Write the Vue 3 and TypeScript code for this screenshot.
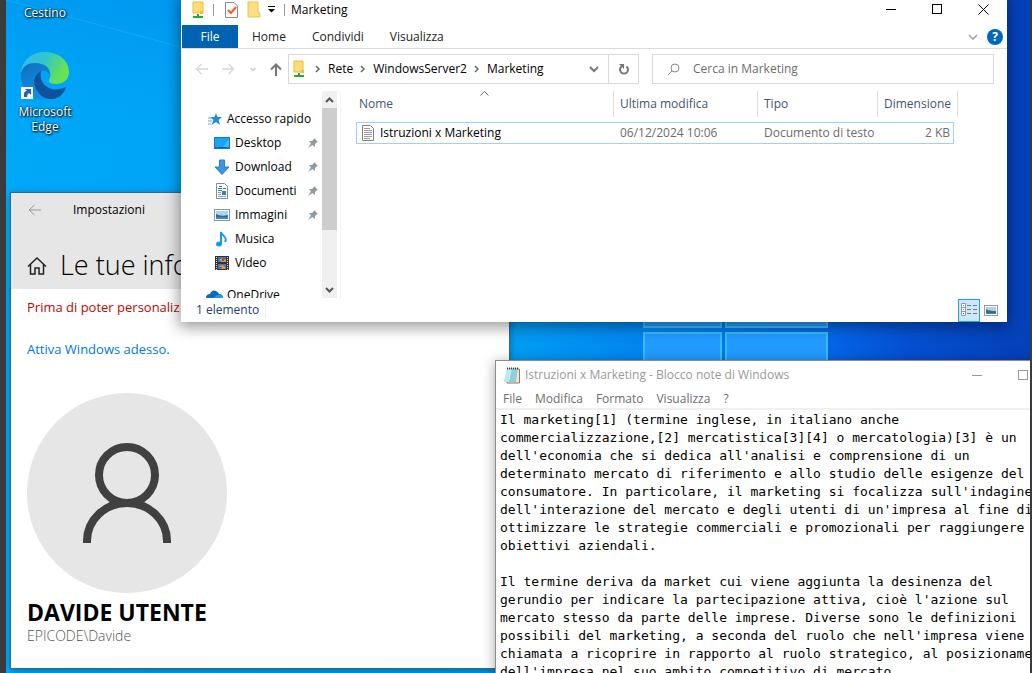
<script setup lang="ts">
import { ref } from 'vue'

interface NavItem {
  label: string
  icon: 'desktop' | 'download' | 'documents' | 'pictures' | 'music' | 'video'
  pinned: boolean
}

const navItems: NavItem[] = [
  { label: 'Desktop', icon: 'desktop', pinned: true },
  { label: 'Download', icon: 'download', pinned: true },
  { label: 'Documenti', icon: 'documents', pinned: true },
  { label: 'Immagini', icon: 'pictures', pinned: true },
  { label: 'Musica', icon: 'music', pinned: false },
  { label: 'Video', icon: 'video', pinned: false },
]

const crumbs: string[] = ['Rete', 'WindowsServer2', 'Marketing']
const ribbonTabs: string[] = ['Home', 'Condividi', 'Visualizza']
const notepadMenus: string[] = ['File', 'Modifica', 'Formato', 'Visualizza', '?']
const search = ref('')

const note = ref(
  [
    'Il marketing[1] (termine inglese, in italiano anche',
    'commercializzazione,[2] mercatistica[3][4] o mercatologia)[3] è un',
    "dell'economia che si dedica all'analisi e comprensione di un",
    'determinato mercato di riferimento e allo studio delle esigenze del',
    "consumatore. In particolare, il marketing si focalizza sull'indagine",
    "dell'interazione del mercato e degli utenti di un'impresa al fine di",
    'ottimizzare le strategie commerciali e promozionali per raggiungere',
    'obiettivi aziendali.',
    '',
    'Il termine deriva da market cui viene aggiunta la desinenza del',
    "gerundio per indicare la partecipazione attiva, cioè l'azione sul",
    'mercato stesso da parte delle imprese. Diverse sono le definizioni',
    "possibili del marketing, a seconda del ruolo che nell'impresa viene",
    'chiamata a ricoprire in rapporto al ruolo strategico, al posizionamento',
    "dell'impresa nel suo ambito competitivo di mercato.",
  ].join('\n'),
)
</script>

<template>
  <div class="screen">
    <main class="desktop">
      <svg class="wallpaper" viewBox="0 0 1024 673" preserveAspectRatio="none" aria-hidden="true">
        <defs>
          <linearGradient id="sky" x1="0" y1="0" x2="1" y2="0">
            <stop offset="0" stop-color="#00a8f8" />
            <stop offset="0.5" stop-color="#009cf2" />
            <stop offset="0.63" stop-color="#0084f2" />
            <stop offset="0.8" stop-color="#0467e8" />
            <stop offset="0.88" stop-color="#0450d2" />
            <stop offset="1" stop-color="#0540b8" />
          </linearGradient>
          <linearGradient id="shade" x1="0" y1="0" x2="0" y2="1">
            <stop offset="0" stop-color="#0087e8" stop-opacity="0.4" />
            <stop offset="0.25" stop-color="#00a4fb" stop-opacity="0" />
          </linearGradient>
        </defs>
        <rect width="1024" height="673" fill="url(#sky)" />
        <rect width="1000" height="673" fill="url(#shade)" />
        <path d="M0 0L182 49" stroke="#3bb8fb" stroke-width="1" opacity="0.4" />
        <g fill="#229bff" stroke="#35bff5" stroke-width="2">
          <rect x="638" y="200" width="77" height="127" />
          <rect x="720" y="200" width="101" height="127" />
          <rect x="638" y="333" width="77" height="120" />
          <rect x="720" y="333" width="101" height="120" />
        </g>
      </svg>

      <div class="shortcuts">
        <a class="shortcut" href="#cestino">Cestino</a>
        <a class="shortcut" href="#edge">
          <svg class="edge" width="50" height="50" viewBox="0 0 50 50" aria-hidden="true">
            <defs>
              <linearGradient id="edgeTop" x1="0" y1="0" x2="1" y2="0.4">
                <stop offset="0" stop-color="#35b8f0" />
                <stop offset="0.5" stop-color="#2fc6cd" />
                <stop offset="1" stop-color="#6be34b" />
              </linearGradient>
              <linearGradient id="edgeLeft" x1="0" y1="0" x2="0.5" y2="1">
                <stop offset="0" stop-color="#0f6fc0" />
                <stop offset="1" stop-color="#138fe4" />
              </linearGradient>
            </defs>
            <path d="M1 22C2 9 12 1 25 1C39 1 49 10 49 21C49 29 43 33 36 33C31 33 28 31 29 29C31 26 31 21 28 17C22 10 7 12 1 22Z" fill="url(#edgeTop)" />
            <path d="M1 22C3 15 8 12 15 12C25 12 31 18 30 25C29 21 25 19 22 20C14 22 12 31 16 38C19 44 24 48 30 48C14 52 0 41 1 22Z" fill="url(#edgeLeft)" />
            <path d="M21 20C13 24 12 33 18 41C25 51 40 51 46 37C46 36 45 36 44 37C30 42 18 33 21 20Z" fill="#10519b" />
            <rect x="1" y="36" width="12" height="12" fill="#f4f4f4" />
            <path d="M4 46V43Q4 40 7 40L5 38H11V44L9 42Q7 43 7 46Z" fill="#2860a8" />
          </svg>
          <span>Microsoft<br />Edge</span>
        </a>
      </div>

      <section class="window settings" aria-label="Impostazioni">
        <header class="settings-head">
          <div class="settings-bar">
            <button class="plain" aria-label="Indietro">
              <svg width="14" height="12" viewBox="0 0 14 12"><path d="M13 6H1M6.500 1L1 6L6.500 11" fill="none" stroke="#999" /></svg>
            </button>
            <span>Impostazioni</span>
          </div>
          <div class="settings-title">
            <svg width="20" height="20" viewBox="0 0 20 20" aria-hidden="true">
              <path d="M1 10.500L10 2L19 10.500M3.500 8.500V18H8V12H12V18H16.500V8.500" fill="none" stroke="#222" stroke-width="1.500" />
            </svg>
            <h1>Le tue info</h1>
          </div>
        </header>
        <div class="settings-body">
          <p class="warning">Prima di poter personaliz</p>
          <a class="activate" href="#attiva">Attiva Windows adesso.</a>
          <svg class="avatar" width="200" height="200" viewBox="0 0 200 200" role="img" aria-label="Avatar">
            <circle cx="100" cy="100" r="100" fill="#e6e6e6" />
            <g fill="none" stroke="#404040" stroke-width="8">
              <circle cx="100" cy="82" r="28" />
              <path d="M60 150V148A40 38 0 0 1 140 148V150" />
            </g>
          </svg>
          <h2>DAVIDE UTENTE</h2>
          <p class="account">EPICODE\Davide</p>
        </div>
      </section>

      <section class="window explorer" aria-label="Marketing">
        <header class="titlebar">
          <svg width="14" height="18" viewBox="0 0 14 18" aria-hidden="true">
            <path d="M2 1H12V12H2Z" fill="#fbdc76" stroke="#e7bd42" /><path d="M9 10H12V13H9Z" fill="#e7bd42" />
            <path d="M6 13H8V15H12V17H2V15H6Z" fill="#27a83a" />
          </svg>
          <i class="tick"></i>
          <svg class="check-icon" width="13" height="16" viewBox="0 0 13 16" aria-hidden="true">
            <path d="M.5 .5H9L12.500 4V15.500H.5Z" fill="#f7f9fb" stroke="#8b8b8b" /><path d="M3 8L6 11L11 5" fill="none" stroke="#f0601c" stroke-width="2" />
          </svg>
          <svg class="folder-icon" width="14" height="17" viewBox="0 0 14 17" aria-hidden="true">
            <path d="M1 1H11V11L13 12V16H1Z" fill="#fddf80" stroke="#eac254" />
          </svg>
          <svg class="menu-icon" width="8" height="7" viewBox="0 0 8 7" aria-hidden="true"><path d="M0 .5H7" stroke="#000" /><path d="M0 3H7L3.500 6.500Z" fill="#000" /></svg>
          <i class="tick second"></i>
          <span class="caption">Marketing</span>
          <div class="controls">
            <button aria-label="Riduci a icona"><svg width="11" height="11" viewBox="0 0 11 11"><path d="M0 5.500H10" stroke="#000" /></svg></button>
            <button aria-label="Ingrandisci"><svg width="11" height="11" viewBox="0 0 11 11"><rect x=".5" y=".5" width="9" height="9" fill="none" stroke="#000" /></svg></button>
            <button aria-label="Chiudi"><svg width="11" height="11" viewBox="0 0 11 11"><path d="M.5 .5L10.500 10.500M10.500 .5L.5 10.500" stroke="#000" /></svg></button>
          </div>
        </header>

        <nav class="ribbon" aria-label="Barra multifunzione">
          <button class="file-tab">File</button>
          <button v-for="tab in ribbonTabs" :key="tab" class="tab">{{ tab }}</button>
          <button class="plain expand" aria-label="Espandi">
            <svg width="10" height="6" viewBox="0 0 10 6"><path d="M1 1L5 5L9 1" fill="none" stroke="#a0a0a0" stroke-width="1.500" /></svg>
          </button>
          <button class="help" aria-label="Guida">?</button>
        </nav>

        <div class="address-row">
          <div class="history">
            <button class="plain" aria-label="Indietro"><svg width="13" height="12" viewBox="0 0 13 12"><path d="M13 6H2M6.500 1L1.500 6L6.500 11" fill="none" stroke="#d8d8d8" stroke-width="1.500" /></svg></button>
            <button class="plain" aria-label="Avanti"><svg width="13" height="12" viewBox="0 0 13 12"><path d="M0 6H11M6.500 1L11.500 6L6.500 11" fill="none" stroke="#d8d8d8" stroke-width="1.500" /></svg></button>
            <button class="plain" aria-label="Percorsi recenti"><svg width="6" height="5" viewBox="0 0 6 5"><path d="M.5 1L3 3.500L5.500 1" fill="none" stroke="#cfcfcf" stroke-width="1.500" /></svg></button>
            <button class="plain" aria-label="Su"><svg width="12" height="13" viewBox="0 0 12 13"><path d="M6 13V2M1 6.500L6 1.500L11 6.500" fill="none" stroke="#777" stroke-width="2" /></svg></button>
          </div>
          <div class="address">
            <svg class="share" width="14" height="18" viewBox="0 0 14 18" aria-hidden="true">
              <path d="M2 1H11V12H2Z" fill="#fbdc76" stroke="#e7bd42" /><path d="M9 10H12V13H9Z" fill="#e7bd42" />
              <path d="M6 13H8V15H12V17H2V15H6Z" fill="#27a83a" />
            </svg>
            <template v-for="crumb in crumbs" :key="crumb">
              <svg class="chev" width="5" height="8" viewBox="0 0 5 8" aria-hidden="true"><path d="M1 1L4 4L1 7" fill="none" stroke="#666" stroke-width="1.500" /></svg>
              <a class="crumb" href="#percorso">{{ crumb }}</a>
            </template>
            <button class="plain drop" aria-label="Cronologia"><svg width="10" height="7" viewBox="0 0 10 7"><path d="M1 1L5 5L9 1" fill="none" stroke="#777" stroke-width="2" /></svg></button>
            <button class="refresh" aria-label="Aggiorna">
              <svg width="12" height="13" viewBox="0 0 12 13"><path d="M8.500 3.500A4 4 0 1 1 3.500 3.500" fill="none" stroke="#777" stroke-width="2" /><path d="M1 1H6V6Z" fill="#777" /></svg>
            </button>
          </div>
          <label class="search">
            <svg width="13" height="13" viewBox="0 0 13 13" aria-hidden="true"><circle cx="8" cy="5" r="4" fill="none" stroke="#888" /><path d="M5 8L1 12" stroke="#888" /></svg>
            <input v-model="search" type="search" placeholder="Cerca in Marketing" aria-label="Cerca in Marketing" />
          </label>
        </div>

        <div class="content">
          <aside class="tree">
            <ul>
              <li class="root">
                <svg width="14" height="14" viewBox="0 0 14 14" aria-hidden="true"><path d="M8 1L9.500 5H14L10.500 8L12 13L8 10L3.500 13L5.500 8L2.500 5H6.500Z" fill="#1e8be0" /><path d="M0 6H4M0 9H4M0 12H3" stroke="#4fa9ee" /></svg>
                <span>Accesso rapido</span>
              </li>
              <li v-for="item in navItems" :key="item.label">
                <svg width="16" height="16" viewBox="0 0 16 16" aria-hidden="true">
                  <template v-if="item.icon === 'desktop'">
                    <rect x=".5" y="2.500" width="15" height="11" fill="#1ca3f5" stroke="#1277c6" /><path d="M1 12.500H15" stroke="#0b63b0" stroke-dasharray="2 1 9 1 1" /><path d="M9 12L15 4V12Z" fill="#45b7fa" />
                  </template>
                  <path v-else-if="item.icon === 'download'" d="M5.500 1H10.500V8H15L8 15.500L1 8H5.500Z" fill="#3d94e2" stroke="#2a7fcd" />
                  <template v-else-if="item.icon === 'documents'">
                    <path d="M2.500 .500H10.500L13.500 3.500V15.500H2.500Z" fill="#fff" stroke="#8a8a8a" /><path d="M5 3.500H8M4 5.500H8M4 7.500H8M9 5.500H12" stroke="#1380c9" /><path d="M4 9.500H7M4 11.500H7M4 13.500H12" stroke="#8aa4b4" /><rect x="8" y="8" width="4" height="4" fill="#2b88ba" />
                  </template>
                  <template v-else-if="item.icon === 'pictures'">
                    <rect x=".5" y="2.500" width="15" height="11" fill="#fff" stroke="#929292" /><rect x="2" y="4" width="12" height="8" fill="#a9d6f5" /><path d="M2 7Q7 10 14 8V12H2Z" fill="#276f8e" /><path d="M2 10H14V12H2Z" fill="#3d89c2" />
                  </template>
                  <template v-else-if="item.icon === 'music'">
                    <ellipse cx="5" cy="13" rx="3" ry="2.500" fill="#159af0" /><path d="M7 13V1C8 5 14 6 11 11" fill="none" stroke="#159af0" stroke-width="2" />
                  </template>
                  <template v-else>
                    <rect x="1" y="1" width="14" height="14" fill="#333" /><path d="M2.500 2V15M13.500 2V15" stroke="#ddd" stroke-dasharray="1 1" /><rect x="4" y="2" width="8" height="5" fill="#3d70c0" /><rect x="4" y="9" width="8" height="5" fill="#4679cb" /><path d="M5 5L8 3L10 5L12 4V7H8ZM5 12L8 10L11 12V14H8Z" fill="#d9a130" /><path d="M8 4H10V6H8ZM6 12H8V13H6Z" fill="#be352c" />
                  </template>
                </svg>
                <span>{{ item.label }}</span>
                <svg v-if="item.pinned" class="pin" width="10" height="10" viewBox="0 0 10 10" aria-hidden="true"><path d="M6 0L10 4L8.500 4.500L7 6V9L4.500 7L0 10L3 5.500L1 3H4L5.500 1.500Z" fill="#8c9aa5" /></svg>
              </li>
              <li class="root cloud">
                <svg width="17" height="12" viewBox="0 0 17 12" aria-hidden="true"><path d="M0 9Q0 5 4 5Q6 0 10 2Q12 3 13 5Q17 5 17 9Q17 12 14 12H3Q0 12 0 9Z" fill="#0f67bd" /><path d="M4 12L11 6Q17 5 17 9Q17 12 14 12Z" fill="#2499e7" /></svg>
                <span>OneDrive</span>
              </li>
            </ul>
            <div class="scrollbar" aria-hidden="true">
              <svg width="9" height="6" viewBox="0 0 9 6"><path d="M1 5L4.500 1.500L8 5" fill="none" stroke="#555" stroke-width="2" /></svg>
              <div class="thumb"></div>
              <svg width="9" height="6" viewBox="0 0 9 6"><path d="M1 1L4.500 4.500L8 1" fill="none" stroke="#555" stroke-width="2" /></svg>
            </div>
          </aside>

          <div class="files">
            <table>
              <colgroup><col class="c-name" /><col class="c-date" /><col class="c-type" /><col class="c-size" /></colgroup>
              <thead>
                <tr>
                  <th>Nome<svg class="sort" width="9" height="5" viewBox="0 0 9 5" aria-hidden="true"><path d="M.5 4.500L4.500 .5L8.500 4.500" fill="none" stroke="#666" /></svg></th>
                  <th>Ultima modifica</th>
                  <th>Tipo</th>
                  <th>Dimensione</th>
                </tr>
              </thead>
              <tbody>
                <tr>
                  <td class="file-name">
                    <svg width="12" height="16" viewBox="0 0 12 16" aria-hidden="true"><path d="M.5 .5H8.500L11.500 3.500V15.500H.5Z" fill="#fff" stroke="#808080" /><path d="M2 3.500H8M2 5.500H10M2 7.500H10M2 9.500H10M2 11.500H10M2 13.500H8" stroke="#9a9a9a" /></svg>
                    <span>Istruzioni x Marketing</span>
                  </td>
                  <td>06/12/2024 10:06</td>
                  <td>Documento di testo</td>
                  <td class="size">2 KB</td>
                </tr>
              </tbody>
            </table>
          </div>
        </div>

        <footer class="status">
          <span class="count">1 elemento</span>
          <button class="view active" aria-label="Dettagli">
            <svg width="16" height="14" viewBox="0 0 16 14"><path d="M.5 .5H4.500V12.500H.5ZM.5 4.500H4.500M.5 8.500H4.500" fill="#fff" stroke="#999" /><path d="M6 2.500H10M12 2.500H16M6 6.500H10M12 6.500H16M6 10.500H10M12 10.500H16" stroke="#778" /><rect x="2" y="2" width="1" height="1" fill="#777" /><rect x="2" y="6" width="1" height="1" fill="#59c" /><rect x="2" y="10" width="1" height="1" fill="#c22" /></svg>
          </button>
          <button class="view" aria-label="Icone grandi">
            <svg width="14" height="11" viewBox="0 0 14 11"><rect x=".5" y=".5" width="13" height="10" fill="#fff" stroke="#999" /><rect x="2" y="2" width="10" height="7" fill="#a8d1fa" /><path d="M2 4Q5 6 12 6V9H2Z" fill="#3d6f6d" /><path d="M2 8H12V9H2Z" fill="#4780b8" /></svg>
          </button>
        </footer>
      </section>

      <section class="window notepad" aria-label="Blocco note">
        <header class="note-title">
          <svg width="17" height="17" viewBox="0 0 17 17" aria-hidden="true">
            <path d="M4 2H15.500V16H3Z" fill="#f5ead0" stroke="#927954" /><path d="M3 2H14L12 15H0Z" fill="#8ed0df" /><path d="M3 2H8L5 15H0Z" fill="#bde8ef" /><path d="M3 1.500H15" stroke="#444" stroke-width="2" stroke-dasharray="1 1" />
          </svg>
          <span class="caption">Istruzioni x Marketing - Blocco note di Windows</span>
          <div class="controls muted">
            <button aria-label="Riduci a icona"><svg width="11" height="11" viewBox="0 0 11 11"><path d="M0 5.500H10" stroke="#999" /></svg></button>
            <button aria-label="Ingrandisci"><svg width="11" height="11" viewBox="0 0 11 11"><rect x=".5" y=".5" width="9" height="9" fill="none" stroke="#999" /></svg></button>
          </div>
        </header>
        <nav class="note-menu" aria-label="Menu">
          <button v-for="menu in notepadMenus" :key="menu">{{ menu }}</button>
        </nav>
        <textarea v-model="note" aria-label="Testo" wrap="off" spellcheck="false"></textarea>
      </section>
    </main>
  </div>
</template>

<style>
html,
body {
  margin: 0;
  overflow: hidden;
}
</style>

<style scoped>
* {
  box-sizing: border-box;
}

.screen {
  height: 100vh;
  padding: 0 2px 0 6px;
  background: #3b3b3d;
  font: 12px/16px 'Segoe UI', 'Open Sans', 'Noto Sans', sans-serif;
  color: #000;
}

.desktop {
  position: relative;
  height: 100%;
  overflow: hidden;
}

.wallpaper {
  position: absolute;
  inset: 0;
  width: 100%;
  height: 100%;
}

button {
  margin: 0;
  padding: 0;
  border: 0;
  background: none;
  color: inherit;
  font: inherit;
  white-space: nowrap;
}

svg {
  display: block;
  flex: none;
}

a {
  color: inherit;
  text-decoration: none;
}

h1,
h2,
p,
ul {
  margin: 0;
  padding: 0;
}

.shortcuts {
  position: relative;
  display: flex;
  flex-direction: column;
  gap: 31px;
  width: 78px;
  padding-top: 5px;
}

.shortcut {
  display: flex;
  flex-direction: column;
  align-items: center;
  gap: 3px;
  color: #fff;
  line-height: 15px;
  text-align: center;
  text-shadow: 1px 1px 2px #000, 0 0 2px #000;
}

.window {
  position: absolute;
  background: #fff;
}

/* Settings */
.settings {
  top: 193px;
  bottom: 5px;
  left: 5px;
  width: 498px;
  box-shadow: 0 0 0 1px #2b6d8e, 0 2px 8px rgba(0, 0, 0, 0.4);
}

.settings-head {
  height: 96px;
  background: #e6e6e6;
}

.settings-bar {
  display: flex;
  align-items: center;
  gap: 31px;
  height: 33px;
  padding-left: 17px;
}

.settings-title {
  display: flex;
  align-items: center;
  gap: 13px;
  height: 63px;
  padding: 15px 0 0 16px;
}

.settings-title svg {
  margin-top: 2px;
}

h1 {
  font-size: 27px;
  font-weight: 300;
  line-height: 36px;
}

.settings-body {
  display: flex;
  flex-direction: column;
  align-items: flex-start;
  padding: 8px 16px;
  font-size: 13px;
  line-height: 20px;
}

.warning {
  color: #c50500;
}

.activate {
  margin-top: 22px;
  color: #0078d7;
}

.avatar {
  margin: 34px 0 4px;
}

h2 {
  font-size: 23px;
  font-weight: 700;
  line-height: 30px;
}

.account {
  color: #555;
  font-size: 14px;
  font-weight: 300;
  line-height: 18px;
}

/* Explorer */
.explorer {
  top: -6px;
  right: 23px;
  left: 175px;
  display: flex;
  flex-direction: column;
  height: 328px;
  padding-left: 1px;
  box-shadow: 0 3px 14px 2px rgba(0, 0, 0, 0.4);
}

.titlebar {
  display: flex;
  align-items: center;
  height: 31px;
  padding-left: 9px;
}

.tick {
  width: 1px;
  height: 12px;
  margin-left: 8px;
  background: #999;
}

.tick.second {
  margin-right: 6px;
}

.check-icon {
  margin-left: 11px;
}

.folder-icon {
  margin-left: 9px;
}

.menu-icon {
  margin-left: 7px;
}

.controls {
  display: flex;
  align-self: stretch;
  margin: 0 1px 0 auto;
}

.controls button {
  display: flex;
  align-items: center;
  justify-content: center;
  width: 46px;
}

.ribbon {
  display: flex;
  align-items: center;
  height: 24px;
  border-bottom: 1px solid #dadbdc;
  color: #222;
}

.file-tab {
  width: 56px;
  height: 23px;
  background: #0063b1;
  color: #fff;
}

.tab {
  padding: 0 14px;
}

.tab + .tab {
  padding-left: 12px;
}

.expand {
  margin-left: auto;
}

.help {
  width: 16px;
  height: 16px;
  margin: 0 4px 0 9px;
  border-radius: 50%;
  background: #0067c0;
  color: #fff;
  font-weight: 700;
}

.address-row {
  display: flex;
  align-items: center;
  gap: 13px;
  height: 40px;
  padding: 0 13px;
}

.history {
  display: flex;
  align-items: center;
  justify-content: space-between;
  width: 87px;
  margin-right: -7px;
}

.address {
  display: flex;
  flex: 1 1 351px;
  align-items: center;
  height: 30px;
  border: 1px solid #d9d9d9;
}

.share {
  margin: 0 3px;
}

.chev {
  margin: 0 8px 0 6px;
}

.crumb + .chev {
  margin-left: 7px;
}

.drop {
  margin: 0 9px 0 auto;
}

.refresh {
  display: flex;
  align-items: center;
  justify-content: center;
  align-self: stretch;
  width: 30px;
  border-left: 1px solid #d9d9d9;
}

.search {
  display: flex;
  flex: 1 1 342px;
  align-items: center;
  gap: 13px;
  height: 30px;
  padding-left: 14px;
  border: 1px solid #d9d9d9;
}

.search input {
  flex: 1;
  min-width: 0;
  padding: 0;
  border: 0;
  outline: 0;
  background: none;
  font: inherit;
}

.search input::placeholder {
  color: #6d6d6d;
  opacity: 1;
}

.content {
  display: flex;
  flex: 1;
  min-height: 0;
  padding-top: 2px;
}

.tree {
  display: flex;
  justify-content: space-between;
  width: 159px;
  padding-right: 3px;
  border-right: 1px solid #f5f5f5;
  overflow: hidden;
}

.tree ul {
  flex: 1;
  padding-top: 16px;
  list-style: none;
}

.tree li {
  display: flex;
  align-items: center;
  gap: 5px;
  height: 24px;
  padding: 0 4px 0 32px;
  white-space: nowrap;
}

.tree li.root {
  padding-left: 26px;
}

.tree li.cloud {
  gap: 4px;
  margin-top: 8px;
  padding-left: 24px;
}

.pin {
  margin-left: auto;
}

.scrollbar {
  display: flex;
  flex-direction: column;
  align-items: center;
  width: 15px;
  padding: 6px 0 5px;
  background: #f0f0f0;
}

.thumb {
  width: 15px;
  height: 122px;
  margin: 5px 0 auto;
  background: #cdcdcd;
}

.files {
  flex: 1;
  padding-left: 15px;
}

table {
  width: 598px;
  border-collapse: separate;
  border-spacing: 0;
  table-layout: fixed;
}

.c-name {
  width: 257px;
}

.c-date {
  width: 144px;
}

.c-type {
  width: 120px;
}

.c-size {
  width: 77px;
}

th {
  position: relative;
  height: 26px;
  padding: 0 0 0 7px;
  color: #44546f;
  font-weight: 400;
  text-align: left;
  white-space: nowrap;
}

th:first-child {
  padding-left: 3px;
}

th::after {
  position: absolute;
  top: 0;
  right: -1px;
  bottom: 0;
  width: 1px;
  background: #e2e2e2;
  content: '';
}

th:last-child::after {
  right: -4px;
}

.sort {
  position: absolute;
  top: 0;
  left: calc(50% - 5px);
}

tbody::before {
  display: block;
  height: 5px;
  content: '';
}

td {
  height: 22px;
  padding: 0 0 0 7px;
  border: solid #99d1ff;
  border-width: 1px 0;
  color: #6d6d6d;
  white-space: nowrap;
}

td:first-child {
  border-left-width: 1px;
}

td:last-child {
  border-right-width: 1px;
}

.file-name {
  display: flex;
  align-items: center;
  gap: 6px;
  padding-left: 5px;
  color: #000;
}

.size {
  padding-right: 3px;
  text-align: right;
}

.status {
  display: flex;
  align-items: center;
  height: 24px;
  padding-right: 5px;
  color: #24426e;
}

.count {
  margin-right: auto;
  padding: 0 6px 0 14px;
  border-right: 1px solid #eee;
}

.view {
  display: flex;
  align-items: center;
  justify-content: center;
  width: 22px;
  height: 23px;
  border: 1px solid transparent;
}

.view.active {
  border-color: #26a0da;
  background: #cbe8f6;
}

/* Notepad */
.notepad {
  top: 360px;
  right: -18px;
  bottom: -4px;
  left: 489px;
  display: flex;
  flex-direction: column;
  border: 1px solid #8c8c8c;
  box-shadow: 0 2px 12px rgba(0, 0, 0, 0.35);
}

.note-title {
  display: flex;
  align-items: center;
  gap: 4px;
  height: 28px;
  padding-left: 8px;
  color: #999;
}

.note-menu {
  display: flex;
  gap: 13px;
  height: 21px;
  padding: 1px 0 0 7px;
  border-bottom: 2px solid #f0f0f0;
  color: #6d6d6d;
}

textarea {
  flex: 1;
  width: 100%;
  min-height: 0;
  padding: 1px 0 0 4px;
  border: 0;
  outline: 0;
  overflow: hidden;
  resize: none;
  background: #fff;
  color: #000;
  font: 13px/18px Consolas, 'DejaVu Sans Mono', monospace;
  white-space: pre;
}
</style>
